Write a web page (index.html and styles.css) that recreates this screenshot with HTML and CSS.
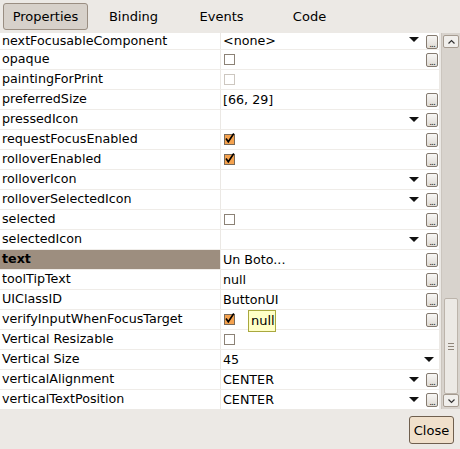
FILE: index.html
```html
<!DOCTYPE html>
<html>
<head>
<meta charset="utf-8">
<link rel="stylesheet" href="styles.css">
</head>
<body>
<div class="window">
  <div class="tabs">
    <div class="tab active">Properties</div>
    <div class="tab">Binding</div>
    <div class="tab">Events</div>
    <div class="tab">Code</div>
  </div>
  <div class="middle">
    <div class="table">
      <div class="rows">
        <div class="row partial"><div class="name">nextFocusableComponent</div><div class="value"><span>&lt;none&gt;</span><i class="arrow"></i></div><div class="slot"><b class="btn">...</b></div></div>
        <div class="row"><div class="name">opaque</div><div class="value"><i class="cb"></i></div><div class="slot"><b class="btn">...</b></div></div>
        <div class="row"><div class="name">paintingForPrint</div><div class="value"><i class="cb dis"></i></div><div class="slot"></div></div>
        <div class="row"><div class="name">preferredSize</div><div class="value"><span>[66, 29]</span></div><div class="slot"><b class="btn">...</b></div></div>
        <div class="row"><div class="name">pressedIcon</div><div class="value"><i class="arrow"></i></div><div class="slot"><b class="btn">...</b></div></div>
        <div class="row"><div class="name">requestFocusEnabled</div><div class="value"><i class="cb on"><svg width="11" height="11" viewBox="0 0 11 11"><path d="M2 5.5 L4.3 8.8 L9.8 0.5" fill="none" stroke="#000" stroke-width="1.6"/></svg></i></div><div class="slot"><b class="btn">...</b></div></div>
        <div class="row"><div class="name">rolloverEnabled</div><div class="value"><i class="cb on"><svg width="11" height="11" viewBox="0 0 11 11"><path d="M2 5.5 L4.3 8.8 L9.8 0.5" fill="none" stroke="#000" stroke-width="1.6"/></svg></i></div><div class="slot"><b class="btn">...</b></div></div>
        <div class="row"><div class="name">rolloverIcon</div><div class="value"><i class="arrow"></i></div><div class="slot"><b class="btn">...</b></div></div>
        <div class="row"><div class="name">rolloverSelectedIcon</div><div class="value"><i class="arrow"></i></div><div class="slot"><b class="btn">...</b></div></div>
        <div class="row"><div class="name">selected</div><div class="value"><i class="cb"></i></div><div class="slot"><b class="btn">...</b></div></div>
        <div class="row"><div class="name">selectedIcon</div><div class="value"><i class="arrow"></i></div><div class="slot"><b class="btn">...</b></div></div>
        <div class="row"><div class="name sel">text</div><div class="value"><span>Un Boto...</span></div><div class="slot"><b class="btn">...</b></div></div>
        <div class="row"><div class="name">toolTipText</div><div class="value"><span>null</span></div><div class="slot"><b class="btn">...</b></div></div>
        <div class="row"><div class="name">UIClassID</div><div class="value"><span>ButtonUI</span></div><div class="slot"><b class="btn">...</b></div></div>
        <div class="row"><div class="name">verifyInputWhenFocusTarget</div><div class="value"><i class="cb on"><svg width="11" height="11" viewBox="0 0 11 11"><path d="M2 5.5 L4.3 8.8 L9.8 0.5" fill="none" stroke="#000" stroke-width="1.6"/></svg></i><div class="tooltip">null</div></div><div class="slot"><b class="btn">...</b></div></div>
        <div class="row"><div class="name">Vertical Resizable</div><div class="value"><i class="cb"></i></div></div>
        <div class="row"><div class="name">Vertical Size</div><div class="value"><span>45</span><i class="arrow"></i></div></div>
        <div class="row"><div class="name">verticalAlignment</div><div class="value"><span>CENTER</span><i class="arrow"></i></div><div class="slot"><b class="btn">...</b></div></div>
        <div class="row"><div class="name">verticalTextPosition</div><div class="value"><span>CENTER</span><i class="arrow"></i></div><div class="slot"><b class="btn">...</b></div></div>
      </div>
    </div>
    <div class="scrollbar">
      <div class="sbtn up"><svg width="9" height="6" viewBox="0 0 9 6"><path d="M1.5 4.5 L4.5 1.5 L7.5 4.5" fill="none" stroke="#333" stroke-width="1.2"/></svg></div>
      <div class="track">
        <div class="thumb"><span class="grip"></span><span class="grip"></span><span class="grip"></span></div>
      </div>
      <div class="sbtn down"><svg width="9" height="6" viewBox="0 0 9 6"><path d="M1.5 1.5 L4.5 4.5 L7.5 1.5" fill="none" stroke="#333" stroke-width="1.2"/></svg></div>
    </div>
  </div>
  <div class="bottom">
    <div class="close">Close</div>
  </div>
</div>
</body>
</html>
```

FILE: styles.css
```css
html, body {
  margin: 0;
  padding: 0;
}
body {
  background: #ece9e5;
  font-family: "DejaVu Sans", sans-serif;
  font-size: 12.7px;
  color: #000;
}
.window {
  width: 460px;
  height: 449px;
  display: flex;
  flex-direction: column;
  overflow: hidden;
}
.tabs {
  height: 33px;
  box-sizing: border-box;
  padding: 3px 0 0 3px;
  display: flex;
  gap: 3px;
}
.tab {
  width: 85px;
  height: 27px;
  box-sizing: border-box;
  display: flex;
  align-items: center;
  justify-content: center;
  font-size: 13px;
  border-radius: 3px;
}
.tab.active {
  background: #d7d1ca;
  border: 1px solid #9a8e82;
}
.middle {
  display: flex;
  height: 376px;
}
.table {
  width: 439px;
  height: 376px;
  overflow: hidden;
  background: #fff;
}
.row {
  display: flex;
  height: 19px;
  border-bottom: 1px solid #efece8;
  align-items: center;
}
.name {
  width: 218px;
  height: 19px;
  line-height: 18px;
  padding-left: 2px;
  border-right: 1px solid #ebe8e4;
  white-space: nowrap;
  overflow: hidden;
}
.name.sel {
  background: #9d8e7f;
  font-weight: bold;
}
.value {
  flex: 1;
  height: 19px;
  line-height: 18px;
  display: flex;
  align-items: center;
  padding-left: 2px;
  position: relative;
  white-space: nowrap;
}
.row.partial {
  height: 16px;
}
.row.partial .name {
  height: 16px;
  line-height: 15px;
}
.row.partial .value {
  height: 16px;
}
.row.partial .value span {
  line-height: 15px;
  align-self: flex-start;
}
.row.partial .arrow {
  margin-top: -3px;
}
.row.partial .slot {
  height: 16px;
  align-items: flex-end;
}
.arrow {
  margin-left: auto;
  margin-right: 5px;
  width: 0;
  height: 0;
  border-left: 5px solid transparent;
  border-right: 5px solid transparent;
  border-top: 5px solid #111;
}
.slot {
  width: 15px;
  height: 19px;
  display: flex;
  align-items: center;
}
.btn {
  display: block;
  margin-left: 2px;
  width: 12px;
  height: 14px;
  box-sizing: border-box;
  border: 1px solid #857b70;
  border-radius: 2px;
  background: linear-gradient(#f7f6f4, #e0dbd5);
  font-weight: normal;
  font-size: 9px;
  line-height: 17px;
  text-align: center;
  letter-spacing: -1px;
  overflow: hidden;
  color: #222;
}
.cb {
  display: block;
  margin-left: 1px;
  width: 11px;
  height: 11px;
  box-sizing: border-box;
  border: 1px solid #8c8276;
  background: #fff;
  position: relative;
}
.cb.dis {
  border-color: #cdc7c0;
}
.cb.on {
  background: #f5a24e;
  border-color: #7a6a58;
}
.cb svg {
  position: absolute;
  left: -1px;
  top: -2px;
}
.tooltip {
  position: absolute;
  left: 27px;
  top: 0;
  width: 28px;
  height: 22px;
  box-sizing: border-box;
  background: #ffffc6;
  border: 1px solid #a9a83e;
  font-size: 13px;
  line-height: 20px;
  padding-left: 2px;
  z-index: 2;
}
.scrollbar {
  margin-left: 2px;
  width: 19px;
  height: 376px;
  background: #d8d3cd;
  display: flex;
  flex-direction: column;
  align-items: center;
  box-sizing: border-box;
  border-left: 1px solid #cbc5be;
}
.sbtn {
  width: 16px;
  height: 13px;
  box-sizing: border-box;
  border: 1px solid #a59b90;
  border-radius: 2px;
  background: #f1efec;
  display: flex;
  align-items: center;
  justify-content: center;
}
.sbtn.up {
  margin-top: 2px;
}
.sbtn.down {
  margin-bottom: 2px;
}
.track {
  flex: 1;
  width: 100%;
  display: flex;
  flex-direction: column;
  justify-content: flex-end;
  align-items: center;
}
.thumb {
  width: 14px;
  height: 96px;
  box-sizing: border-box;
  border: 1px solid #bcb4ab;
  border-radius: 2px;
  background: #ece9e5;
  display: flex;
  flex-direction: column;
  align-items: center;
  justify-content: center;
  gap: 2px;
}
.grip {
  display: block;
  width: 6px;
  height: 1px;
  background: #8f857a;
}
.bottom {
  height: 40px;
  display: flex;
  justify-content: flex-end;
  align-items: flex-start;
  padding: 7px 6px 0 0;
  box-sizing: border-box;
}
.close {
  width: 45px;
  height: 28px;
  box-sizing: border-box;
  border: 1px solid #6f5f4e;
  border-radius: 3px;
  background: #f0e0cb;
  display: flex;
  align-items: center;
  justify-content: center;
  font-size: 13px;
}
```
